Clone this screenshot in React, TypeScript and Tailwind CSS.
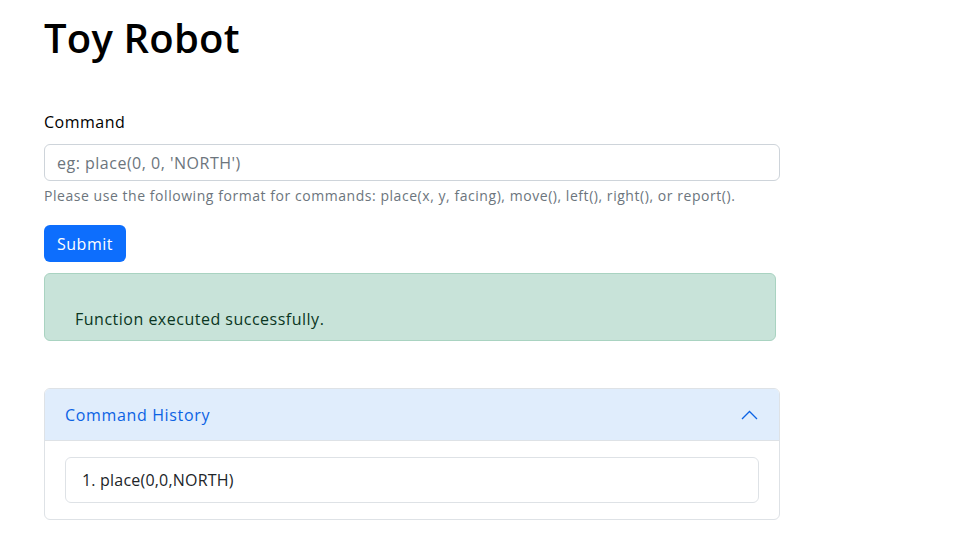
import React from "react";

export default function App() {
  const font = { fontFamily: '"Open Sans", "Noto Sans", sans-serif' };
  return (
    <div className="min-h-screen bg-white text-[#212529] tracking-[0.5px]" style={font}>
      <div className="pl-[44px] pt-[14px]">
        <h1 className="text-[40px] leading-[48px] font-semibold text-black tracking-[0.2px]">Toy Robot</h1>
        <div className="mt-[48px] w-[736px]">
          <label className="block text-[16px] leading-[24px] text-black mb-[10px]">Command</label>
          <input
            className="block w-full h-[37px] rounded-[6px] border border-[#ced4da] px-[12px] text-[16px] tracking-[0.5px] text-[#212529] placeholder:text-[#6c757d] outline-none"
            placeholder="eg: place(0, 0, 'NORTH')"
          />
          <div className="mt-[4px] text-[14px] leading-[21px] text-[#6c757d] tracking-[0.55px]">
            Please use the following format for commands: place(x, y, facing), move(), left(), right(), or report().
          </div>
          <button className="mt-[19px] h-[37px] px-[13px] rounded-[6px] bg-[#0d6efd] text-white text-[16px] leading-[24px] tracking-[0.5px]">
            Submit
          </button>
        </div>
        <div className="mt-[11px] w-[732px] h-[68px] rounded-[6px] border border-[#a9d3c1] bg-[#c8e3d9] px-[30px] pt-[33px] text-[16px] leading-[24px] text-[#0a3622]">
          Function executed successfully.
        </div>
        <div className="mt-[47px] w-[736px] rounded-[6px] border border-[#dee2e6] overflow-hidden">
          <div className="h-[52px] bg-[#e0edfc] border-b border-[#dee2e6] flex items-center justify-between pl-[20px] pr-[21px]">
            <span className="text-[16px] text-[#0c63e4] tracking-[0.65px]">Command History</span>
            <svg width="17" height="10" viewBox="0 0 17 10" fill="none">
              <path d="M1 9 L8.5 1.5 L16 9" stroke="#0c63e4" strokeWidth="1.3" />
            </svg>
          </div>
          <div className="px-[20px] pt-[16px] pb-[16px]">
            <div className="h-[46px] rounded-[6px] border border-[#dee2e6] flex items-center px-[16px] text-[16px] text-[#212529] tracking-[0.2px]">
              1. place(0,0,NORTH)
            </div>
          </div>
        </div>
      </div>
    </div>
  );
}
